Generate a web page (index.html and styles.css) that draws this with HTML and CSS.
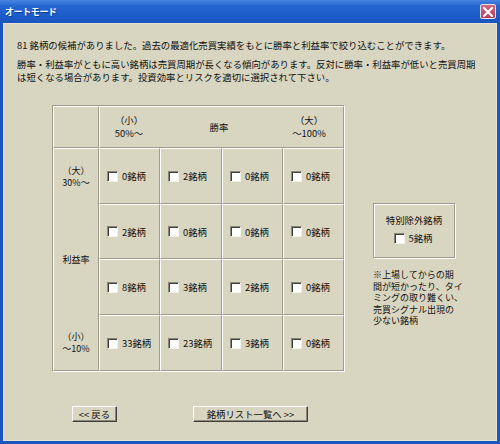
FILE: index.html
```html
<!DOCTYPE html>
<html lang="ja">
<head>
<meta charset="utf-8">
<title>オートモード</title>
<link rel="stylesheet" href="styles.css">
</head>
<body>
<div class="window">
  <div class="titlebar">
    <span class="title">オートモード</span>
    <span class="close"><svg width="10" height="10" viewBox="0 0 10 10"><path d="M1 1L9 9M9 1L1 9" stroke="#fff" stroke-width="2" stroke-linecap="square"/></svg></span>
  </div>
  <div class="body">
    <p class="intro">81 銘柄の候補がありました。過去の最適化売買実績をもとに勝率と利益率で絞り込むことができます。</p>
    <p class="intro2">勝率・利益率がともに高い銘柄は売買周期が長くなる傾向があります。反対に勝率・利益率が低いと売買周期<br>は短くなる場合があります。投資効率とリスクを適切に選択されて下さい。</p>
    <div class="main">
      <div class="matrix">
        <div class="cell corner"></div>
        <div class="cell head">
          <div class="hl">（小）<br>50%～</div>
          <div class="hm">勝率</div>
          <div class="hr">（大）<br>～100%</div>
        </div>
        <div class="cell side">
          <div class="sl">（大）<br>30%～</div>
          <div class="sl">利益率</div>
          <div class="sl">（小）<br>～10%</div>
        </div>
        <div class="cell data"><span class="cb"></span>0銘柄</div>
        <div class="cell data"><span class="cb"></span>2銘柄</div>
        <div class="cell data"><span class="cb"></span>0銘柄</div>
        <div class="cell data"><span class="cb"></span>0銘柄</div>
        <div class="cell data"><span class="cb"></span>2銘柄</div>
        <div class="cell data"><span class="cb"></span>0銘柄</div>
        <div class="cell data"><span class="cb"></span>0銘柄</div>
        <div class="cell data"><span class="cb"></span>0銘柄</div>
        <div class="cell data"><span class="cb"></span>8銘柄</div>
        <div class="cell data"><span class="cb"></span>3銘柄</div>
        <div class="cell data"><span class="cb"></span>2銘柄</div>
        <div class="cell data"><span class="cb"></span>0銘柄</div>
        <div class="cell data"><span class="cb"></span>33銘柄</div>
        <div class="cell data"><span class="cb"></span>23銘柄</div>
        <div class="cell data"><span class="cb"></span>3銘柄</div>
        <div class="cell data"><span class="cb"></span>0銘柄</div>
      </div>
      <div class="aside">
        <div class="group">
          <div class="group-title">特別除外銘柄</div>
          <div class="group-row"><span class="cb"></span>5銘柄</div>
        </div>
        <p class="note">※上場してからの期<br>間が短かったり、タイ<br>ミングの取り難くい、<br>売買シグナル出現の<br>少ない銘柄</p>
      </div>
    </div>
    <div class="buttons">
      <button class="btn btn-back">&lt;&lt; 戻る</button>
      <button class="btn btn-next">銘柄リスト一覧へ &gt;&gt;</button>
    </div>
  </div>
</div>
</body>
</html>
```
FILE: styles.css
```css
* { box-sizing: border-box; }
html, body {
  margin: 0;
  padding: 0;
  width: 500px;
  height: 444px;
  overflow: hidden;
  font-family: "Noto Sans CJK JP", "Liberation Sans", sans-serif;
  color: #111;
}
.window {
  width: 500px;
  height: 444px;
  display: flex;
  flex-direction: column;
  background: #1a56c2;
}
.titlebar {
  height: 23px;
  flex: none;
  display: flex;
  align-items: center;
  justify-content: space-between;
  padding: 0 4px 0 5px;
  background: linear-gradient(#4a86e0 0%, #2466d2 25%, #1c5cc8 70%, #1a55bc 100%);
}
.title {
  color: #fff;
  font-size: 9px;
  font-weight: bold;
  letter-spacing: -0.4px;
  text-shadow: 1px 1px 0 #0d3a8a;
}
.close {
  width: 16px;
  height: 15px;
  display: flex;
  align-items: center;
  justify-content: center;
  background: linear-gradient(#d06a80, #b8405c);
  border: 1px solid #e8e0e8;
  border-radius: 2px;
}
.body {
  flex: 1;
  margin: 0 3px 3px 3px;
  background: #d8d5c0;
  border: 1px solid #e6e3d0;
  padding: 15px 0 0 13px;
  font-size: 9.4px;
}
.intro, .intro2 {
  margin: 0;
  line-height: 12px;
  white-space: nowrap;
}
.intro { margin-bottom: 7px; }
.intro2 { line-height: 12.5px; }
.main {
  display: flex;
  align-items: flex-start;
  margin-top: 22px;
}
.matrix {
  margin-left: 35px;
  display: grid;
  grid-template-columns: 46px 61px 62px 61px 61px;
  grid-template-rows: 42px 56px 55px 56px 56px;
  border: 1px solid;
  border-color: #9d9b8a #fff #fff #9d9b8a;
}
.cell {
  border: 1px solid;
  border-color: #fff #9d9b8a #9d9b8a #fff;
  line-height: 12px;
}
.head {
  grid-column: span 4;
  display: flex;
  align-items: center;
  padding-right: 5px;
  text-align: center;
}
.hl, .hr { width: 58px; line-height: 13px; }
.hm { flex: 1; }
.side {
  grid-column: 1;
  grid-row: 2 / span 4;
  display: flex;
  flex-direction: column;
  justify-content: space-between;
  align-items: center;
  text-align: center;
  padding: 16px 0 16px;
}
.sl { font-size: 9px; line-height: 11.5px; }
.data {
  display: flex;
  align-items: center;
  gap: 4px;
  padding-left: 7px;
}
.cb {
  width: 11px;
  height: 11px;
  flex: none;
  background: #fff;
  border: 1px solid;
  border-color: #8a8878 #f4f3ea #f4f3ea #8a8878;
  box-shadow: inset 1px 1px 0 #404040;
}
.aside {
  margin-left: 28px;
  margin-top: 98px;
  width: 110px;
}
.group {
  width: 82px;
  height: 55px;
  border: 1px solid #9d9b8a;
  box-shadow: 1px 1px 0 #fff, inset 1px 1px 0 #fff;
  padding-top: 10px;
  text-align: center;
  line-height: 12px;
}
.group-row {
  margin-top: 6px;
  display: flex;
  justify-content: center;
  align-items: center;
  gap: 4px;
  padding-right: 2px;
}
.note {
  margin: 11px 0 0 0;
  font-size: 9px;
  line-height: 11.5px;
  white-space: nowrap;
}
.buttons {
  display: flex;
  gap: 76px;
  margin: 34px 0 0 55px;
}
.btn {
  height: 16px;
  padding: 0;
  font-family: inherit;
  font-size: 9.4px;
  line-height: 12px;
  color: #111;
  background: #d8d5c0;
  border: 1px solid;
  border-color: #fff #404040 #404040 #fff;
  box-shadow: inset -1px -1px 0 #8a8878;
}
.btn-back { width: 45px; }
.btn-next { width: 115px; }
```
